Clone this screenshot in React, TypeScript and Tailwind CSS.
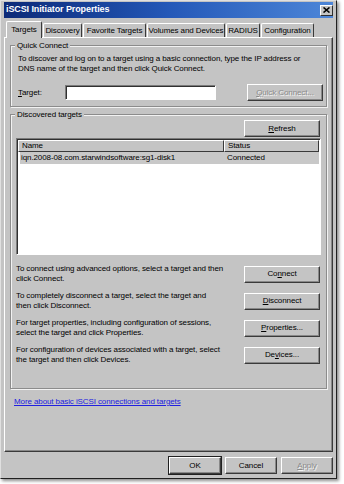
import React from "react";

const font = { fontFamily: '"Liberation Sans", Arial, sans-serif' };

const Btn = ({
  children,
  disabled,
  isDefault,
  className = "",
}: {
  children: React.ReactNode;
  disabled?: boolean;
  isDefault?: boolean;
  className?: string;
}) => (
  <div
    className={`flex items-center justify-center h-[17px] bg-[#c4c4c4] border border-t-white border-l-white border-r-[#3a3a3a] border-b-[#3a3a3a] shadow-[inset_-1px_-1px_#888] whitespace-nowrap ${
      disabled ? "text-[#8a8a8a] [text-shadow:1px_1px_#f4f4f4]" : "text-black"
    } ${isDefault ? "outline outline-1 outline-[#202020]" : ""} ${className}`}
  >
    {children}
  </div>
);

const U = ({ children }: { children: React.ReactNode }) => <span className="underline">{children}</span>;

const Group = ({
  title,
  children,
  className = "",
}: {
  title: string;
  children: React.ReactNode;
  className?: string;
}) => (
  <div className={`relative border border-[#8c8c8c] shadow-[1px_1px_#f2f2f2,inset_1px_1px_#f2f2f2] ${className}`}>
    <div className="absolute -top-[6px] left-[4px] px-[2px] bg-[#c4c4c4] leading-[11px]">{title}</div>
    {children}
  </div>
);

const tabs: [string, string][] = [
  ["Discovery", "w-[39px]"],
  ["Favorite Targets", "w-[63px]"],
  ["Volumes and Devices", "w-[78px]"],
  ["RADIUS", "w-[34px]"],
  ["Configuration", "w-[53px]"],
];

const actions = [
  {
    text: ["To connect using advanced options, select a target and then", "click Connect."],
    btn: (
      <>
        Co<U>n</U>nect
      </>
    ),
  },
  {
    text: ["To completely disconnect a target, select the target and", "then click Disconnect."],
    btn: (
      <>
        <U>D</U>isconnect
      </>
    ),
  },
  {
    text: ["For target properties, including configuration of sessions,", "select the target and click Properties."],
    btn: (
      <>
        <U>P</U>roperties...
      </>
    ),
  },
  {
    text: ["For configuration of devices associated with a target, select", "the target and then click Devices."],
    btn: (
      <>
        De<U>v</U>ices...
      </>
    ),
  },
];

export default function App() {
  return (
    <div className="w-[344px] h-[484px] bg-white overflow-hidden text-[8px] tracking-[-0.1px]" style={font}>
      <div className="w-[337px] h-[479px] bg-[#c4c4c4] border border-t-[#e0e0e0] border-l-[#e0e0e0] border-r-[#202020] border-b-[#202020] shadow-[2px_2px_3px_rgba(0,0,0,0.45)] flex flex-col px-[3px] pt-[1px] text-black">
        {/* title bar */}
        <div className="h-[16px] flex items-center justify-between bg-gradient-to-r from-[#0c2a78] via-[#2458b8] to-[#4d86d8] pl-[2px] pr-[0px]">
          <span className="text-white font-bold text-[9px]">iSCSI Initiator Properties</span>
          <div className="w-[13px] h-[11px] bg-[#c4c4c4] border border-t-white border-l-white border-r-[#303030] border-b-[#303030] flex items-center justify-center">
            <svg width="7" height="6" viewBox="0 0 7 6">
              <path d="M0.5 0.5 L6.5 5.5 M6.5 0.5 L0.5 5.5" stroke="black" strokeWidth="1.6" />
            </svg>
          </div>
        </div>

        {/* tabs */}
        <div className="flex items-end h-[18px] mt-[1px] pl-[2px]">
          <div className="relative z-10 h-[17px] w-[36px] bg-[#c4c4c4] border border-b-0 border-t-white border-l-white border-r-[#3a3a3a] rounded-t-[2px] flex items-center justify-center -mb-[1px]">
            Targets
          </div>
          {tabs.map(([t, w]) => (
            <div
              key={t}
              className={`${w} h-[14px] ml-[1px] bg-[#c4c4c4] border border-b-0 border-t-white border-l-white border-r-[#3a3a3a] rounded-t-[2px] flex items-center justify-center whitespace-nowrap`}
            >
              {t}
            </div>
          ))}
        </div>

        {/* tab panel */}
        <div className="h-[415px] border border-t-white border-l-white border-r-[#3a3a3a] border-b-[#3a3a3a] shadow-[inset_-1px_-1px_#888] px-[5px] pt-[7px] flex flex-col">
          <Group title="Quick Connect" className="h-[62px] px-[7px] pt-[8px]">
            <div className="leading-[10px] whitespace-nowrap">
              To discover and log on to a target using a basic connection, type the IP address or
              <br />
              DNS name of the target and then click Quick Connect.
            </div>
            <div className="flex items-center mt-[10px]">
              <span className="w-[47px]">
                <U>T</U>arget:
              </span>
              <div className="w-[151px] h-[15px] bg-white border border-t-[#7a7a7a] border-l-[#7a7a7a] border-r-white border-b-white shadow-[inset_1px_1px_#303030]" />
              <Btn disabled className="w-[76px] ml-auto mr-[-4px]">
                <U>Q</U>uick Connect...
              </Btn>
            </div>
          </Group>

          <Group title="Discovered targets" className="mt-[7px] h-[275px] px-[5px] pt-[5px]">
            <div className="flex justify-end pr-[1px]">
              <Btn className="w-[76px]">
                <U>R</U>efresh
              </Btn>
            </div>
            <div className="mt-[1px] h-[117px] bg-white border border-t-[#7a7a7a] border-l-[#7a7a7a] border-r-white border-b-white shadow-[inset_1px_1px_#303030] p-[1px] flex flex-col">
              <div className="flex h-[12px]">
                <div className="w-[206px] bg-[#c4c4c4] border border-t-white border-l-white border-r-[#3a3a3a] border-b-[#3a3a3a] px-[3px] leading-[10px]">
                  Name
                </div>
                <div className="flex-1 bg-[#c4c4c4] border border-t-white border-l-white border-r-[#3a3a3a] border-b-[#3a3a3a] px-[3px] leading-[10px]">
                  Status
                </div>
              </div>
              <div className="flex h-[12px] bg-[#c8c8c8] leading-[12px] ml-[2px]">
                <div className="w-[204px] pl-[1px]">iqn.2008-08.com.starwindsoftware:sg1-disk1</div>
                <div className="flex-1 pl-[3px]">Connected</div>
              </div>
            </div>

            <div className="flex flex-col gap-[7px] mt-[9px]">
              {actions.map((a, i) => (
                <div key={i} className="flex items-center">
                  <div className="flex-1 leading-[10px] whitespace-nowrap">
                    {a.text[0]}
                    <br />
                    {a.text[1]}
                  </div>
                  <Btn className="w-[76px] mr-[1px]">{a.btn}</Btn>
                </div>
              ))}
            </div>
          </Group>

          <div className="mt-[7px] pl-[4px] text-[#2020e0] underline">
            More about basic iSCSI connections and targets
          </div>
        </div>

        {/* bottom buttons */}
        <div className="flex justify-end gap-[4px] mt-[5px] pr-[0px]">
          <Btn isDefault className="w-[52px]">
            OK
          </Btn>
          <Btn className="w-[52px]">Cancel</Btn>
          <Btn disabled className="w-[52px]">
            <U>A</U>pply
          </Btn>
        </div>
      </div>
    </div>
  );
}
